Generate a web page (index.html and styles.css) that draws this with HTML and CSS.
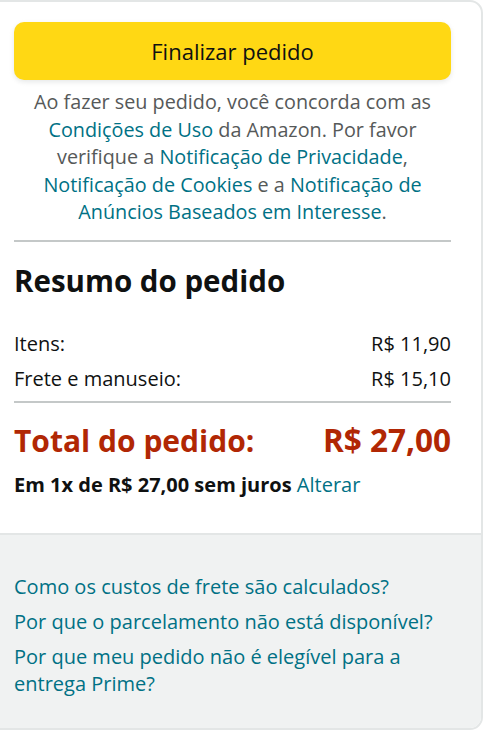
FILE: index.html
```html
<!DOCTYPE html>
<html lang="pt-BR">
<head>
    <meta charset="UTF-8">
    <meta name="viewport" content="width=device-width, initial-scale=1.0">
    <title>Resumo do pedido</title>
    <link rel="stylesheet" href="styles.css">
</head>
<body>
    <div class="summary-box">
        <div class="summary-main">
            <button class="place-order" type="button">Finalizar pedido</button>
            <p class="legal">
                Ao fazer seu pedido, você concorda com as
                <a href="#">Condições de Uso</a> da Amazon. Por favor
                verifique a <a href="#">Notificação de Privacidade</a>,
                <a href="#">Notificação de Cookies</a> e a <a href="#">Notificação de Anúncios Baseados em Interesse</a>.
            </p>
            <hr class="divider">
            <h2 class="summary-title">Resumo do pedido</h2>
            <div class="line-items">
                <div class="line-item">
                    <span>Itens:</span>
                    <span>R$ 11,90</span>
                </div>
                <div class="line-item">
                    <span>Frete e manuseio:</span>
                    <span>R$ 15,10</span>
                </div>
            </div>
            <hr class="divider">
            <div class="total-row">
                <span>Total do pedido:</span>
                <span class="total-value">R$ 27,00</span>
            </div>
            <p class="installments">
                <b>Em 1x de R$ 27,00 sem juros</b> <a href="#">Alterar</a>
            </p>
        </div>
        <div class="summary-help">
            <a href="#">Como os custos de frete são calculados?</a>
            <a href="#">Por que o parcelamento não está disponível?</a>
            <a href="#">Por que meu pedido não é elegível para a entrega Prime?</a>
        </div>
    </div>
</body>
</html>
```

FILE: styles.css
```css
body {
    margin: 0;
    font-family: "Open Sans", Arial, sans-serif;
    color: #0f1111;
    background-color: #ffffff;
}
a {
    color: #007185;
    text-decoration: none;
}
.summary-box {
    width: 497px;
    margin-left: -18px;
    border: 2px solid #e3e6e6;
    border-radius: 0 13px 13px 0;
    overflow: hidden;
}
.summary-main {
    padding: 20px 30px 35px 30px;
}
.place-order {
    display: block;
    width: 100%;
    height: 58px;
    margin: 0;
    border: none;
    border-radius: 10px;
    background-color: #ffd814;
    box-shadow: 0 2px 5px rgba(213, 217, 217, 0.6);
    font-family: inherit;
    font-size: 22px;
    color: #0f1111;
    cursor: pointer;
}
.legal {
    margin: 8px 0 0 0;
    text-align: center;
    font-size: 19.8px;
    line-height: 27.5px;
    color: #565959;
}
.divider {
    margin: 14px 0 0 0;
    border: none;
    border-top: 2px solid #c4c8c8;
}
.summary-title {
    margin: 21px 0 0 0;
    font-size: 29.5px;
    line-height: 36px;
    font-weight: 700;
}
.line-items {
    margin-top: 27px;
    font-size: 20px;
}
.line-item {
    display: flex;
    justify-content: space-between;
    line-height: 35px;
}
.line-items + .divider {
    margin-top: 5px;
}
.total-row {
    display: flex;
    justify-content: space-between;
    align-items: baseline;
    margin-top: 19px;
    font-size: 30px;
    line-height: 36px;
    font-weight: 700;
    color: #b12704;
}
.total-value {
    font-size: 31.5px;
}
.installments {
    margin: 12px 0 0 0;
    font-size: 20px;
    line-height: 27px;
}
.summary-help {
    display: flex;
    flex-direction: column;
    gap: 8px;
    padding: 38px 30px 31px 30px;
    border-top: 2px solid #e3e6e6;
    background-color: #f0f2f2;
    font-size: 20px;
    line-height: 27px;
}
```
